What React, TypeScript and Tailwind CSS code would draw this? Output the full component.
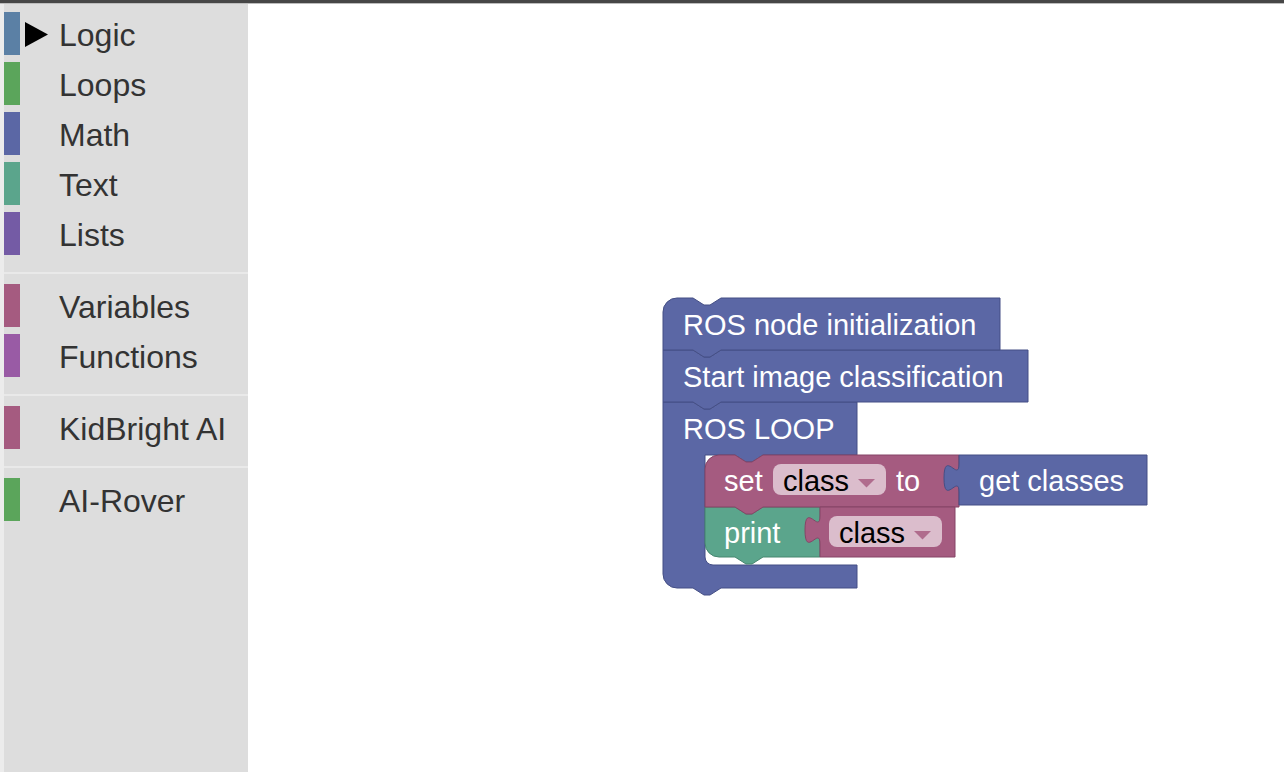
import React from "react";

const cats: { name: string; color: string; arrow?: boolean }[][] = [
  [
    { name: "Logic", color: "bg-[#5b80a5]", arrow: true },
    { name: "Loops", color: "bg-[#5ba55b]" },
    { name: "Math", color: "bg-[#5b67a5]" },
    { name: "Text", color: "bg-[#5ba58c]" },
    { name: "Lists", color: "bg-[#745ba5]" },
  ],
  [
    { name: "Variables", color: "bg-[#a55b80]" },
    { name: "Functions", color: "bg-[#995ba5]" },
  ],
  [{ name: "KidBright AI", color: "bg-[#a55b80]" }],
  [{ name: "AI-Rover", color: "bg-[#5ba55b]" }],
];

const BLUE = "#5b67a5";
const BLUE_D = "#454f85";
const PINK = "#a55b80";
const PINK_D = "#854566";
const GREEN = "#5ba58c";
const GREEN_D = "#46866f";
const PILL = "#dbbdcc";
const ARROW = "#b06c8d";

function Blocks() {
  const font = { fontFamily: '"Liberation Sans", Arial, sans-serif', fontSize: 29 };
  return (
    <svg
      className="absolute left-0 top-0"
      width={1036}
      height={768}
      viewBox="248 4 1036 768"
    >
      <g strokeWidth={1} strokeLinejoin="round">
        {/* ROS LOOP C-block */}
        <path
          d="M 663,402 H 693 l 11,7 l 6,0 l 11,-7 H 857 V 455 H 763 l -11,7 l -6,0 l -11,-7 H 705 V 557 A 8 8 0 0 0 713,565 H 857 V 588 H 721 l -11,7 l -6,0 l -11,-7 H 677 A 14 14 0 0 1 663,574 Z"
          fill={BLUE}
          stroke={BLUE_D}
        />
        {/* Block 2 */}
        <path
          d="M 663,350 H 693 l 11,7 l 6,0 l 11,-7 H 1028 V 402 H 721 l -11,7 l -6,0 l -11,-7 H 663 Z"
          fill={BLUE}
          stroke={BLUE_D}
        />
        {/* Block 1 */}
        <path
          d="M 663,312 A 14 14 0 0 1 677,298 H 693 l 11,7 l 6,0 l 11,-7 H 1000 V 350 H 721 l -11,7 l -6,0 l -11,-7 H 663 Z"
          fill={BLUE}
          stroke={BLUE_D}
        />
        {/* print block */}
        <path
          d="M 705,507 H 735 l 11,7 l 6,0 l 11,-7 H 820 V 557 H 763 l -11,7 l -6,0 l -11,-7 H 719 A 14 14 0 0 1 705,543 Z"
          fill={GREEN}
          stroke={GREEN_D}
        />
        {/* set block */}
        <path
          d="M 705,469 A 14 14 0 0 1 719,455 H 735 l 11,7 l 6,0 l 11,-7 H 959 V 507 H 763 l -11,7 l -6,0 l -11,-7 H 705 Z"
          fill={PINK}
          stroke={PINK_D}
        />
        {/* get classes */}
        <path
          d="M 959,455 H 1147 V 505 H 959 V 492 c 0,-18.7 -15,15 -15,-14 s 15,4.7 15,-14 V 455 Z"
          fill={BLUE}
          stroke={BLUE_D}
        />
        {/* class variable */}
        <path
          d="M 820,507 H 955 V 557 H 820 V 544 c 0,-18.7 -15,15 -15,-14 s 15,4.7 15,-14 V 507 Z"
          fill={PINK}
          stroke={PINK_D}
        />
      </g>
      <rect x={773} y={464} width={113} height={31} rx={8} fill={PILL} />
      <path d="M 858,479 L 875,479 L 866.5,487.5 Z" fill={ARROW} />
      <rect x={829} y={516} width={113} height={31} rx={8} fill={PILL} />
      <path d="M 914,531 L 931,531 L 922.5,539.5 Z" fill={ARROW} />
      <g fill="#ffffff" style={font}>
        <text x={683} y={335}>ROS node initialization</text>
        <text x={683} y={387}>Start image classification</text>
        <text x={683} y={439}>ROS LOOP</text>
        <text x={724} y={491}>set</text>
        <text x={896} y={491}>to</text>
        <text x={979} y={491}>get classes</text>
        <text x={724} y={543}>print</text>
      </g>
      <g fill="#000000" style={font}>
        <text x={783} y={491}>class</text>
        <text x={839} y={543}>class</text>
      </g>
    </svg>
  );
}

export default function App() {
  return (
    <div
      className="w-[1284px] h-[772px] flex flex-col bg-white overflow-hidden"
      style={{ fontFamily: '"Liberation Sans", Arial, sans-serif' }}
    >
      <div className="h-[3px] bg-[#474747]" />
      <div className="h-[1px] bg-[#bdbdbd]" />
      <div className="flex flex-1 min-h-0">
        <div className="w-[4px] bg-[#ececec]" />
        <div className="w-[244px] bg-[#dddddd] pt-[8px]">
          {cats.map((group, gi) => (
            <div key={gi}>
              {gi > 0 && (
                <div className="h-[22px] pt-[10px]">
                  <div className="h-[2px] bg-[#e9e9e9]" />
                </div>
              )}
              {group.map((c) => (
                <div key={c.name} className="h-[50px] flex items-start">
                  <div className="h-[43px] flex items-center w-full">
                    <div className={`w-[16px] h-[43px] ${c.color}`} />
                    <div className="w-[39px] h-[25px] flex items-center justify-start pl-[5px] mt-[1px]">
                      {c.arrow && (
                        <svg width="23" height="25" viewBox="0 0 23 25">
                          <path d="M 0,0 L 23,12.5 L 0,25 Z" fill="#000" />
                        </svg>
                      )}
                    </div>
                    <span className="text-[32px] leading-none text-[#333333] mt-[3px]">{c.name}</span>
                  </div>
                </div>
              ))}
            </div>
          ))}
        </div>
        <div className="relative flex-1 bg-white">
          <Blocks />
        </div>
      </div>
    </div>
  );
}
